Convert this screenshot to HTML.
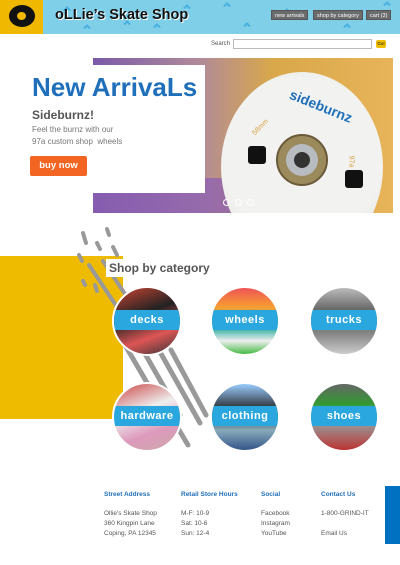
<!DOCTYPE html>
<html><head><meta charset="utf-8"><style>
*{margin:0;padding:0;box-sizing:border-box}
body{width:400px;height:565px;background:#fff;font-family:"Liberation Sans",sans-serif;position:relative;overflow:hidden}
.a{position:absolute}
.nav{background:#6b6b6b;color:#fff;font-size:5.5px;height:10px;line-height:10px;padding:0 3px;top:10px;border:1px solid #555}
.circ{width:70px;height:70px;border-radius:50%;overflow:hidden;border:2px solid #fff}
.band{position:absolute;left:0;right:0;top:22px;height:20px;background:#2ba7df;color:#fff;font-weight:bold;font-size:11px;text-align:center;line-height:20px;letter-spacing:.5px}
.fh{color:#1f6fba;font-weight:bold;font-size:6.5px;top:491px}
.fl{color:#555;font-size:6.5px;line-height:10px;top:509px}
</style></head><body>
<div class="a" style="left:0;top:0;width:400px;height:34px;background:#7fcfe8"></div>
<svg class="a" style="left:43px;top:0" width="357" height="34">
<g fill="#4bb1e0">
<path d="M20 10l4-4 4 4-2 1-2-2-2 2z"/><path d="M80 24l4-4 4 4-2 1-2-2-2 2z"/><path d="M140 8l4-4 4 4-2 1-2-2-2 2z"/><path d="M200 26l4-4 4 4-2 1-2-2-2 2z"/><path d="M240 12l4-4 4 4-2 1-2-2-2 2z"/><path d="M300 27l4-4 4 4-2 1-2-2-2 2z"/><path d="M340 5l4-4 4 4-2 1-2-2-2 2z"/><path d="M40 28l4-4 4 4-2 1-2-2-2 2z"/><path d="M110 27l4-4 4 4-2 1-2-2-2 2z"/><path d="M180 6l4-4 4 4-2 1-2-2-2 2z"/>
</g></svg>
<div class="a" style="left:0;top:0;width:43px;height:34px;background:#f0b800"></div>
<div class="a" style="left:9px;top:5px;width:26px;height:22px;border-radius:50%;background:#111"></div>
<div class="a" style="left:17px;top:12px;width:9px;height:8px;border-radius:50%;background:#f0b800"></div>
<div class="a" style="left:55px;top:7px;font-size:14.5px;font-weight:bold;color:#111;text-shadow:1px 1px 0 #fff">oLLie’s Skate Shop</div>
<div class="a nav" style="left:271px">new arrivals</div>
<div class="a nav" style="left:313px">shop by category</div>
<div class="a nav" style="left:366px">cart (3)</div>
<div class="a" style="left:211px;top:41px;font-size:6px;color:#555">Search</div>
<div class="a" style="left:233px;top:39px;width:139px;height:10px;border:1px solid #bbb"></div>
<div class="a" style="left:376px;top:40px;width:10px;height:8px;background:#f0c000;border-radius:2px;font-size:4.5px;text-align:center;line-height:8px">Go!</div>
<div class="a" style="left:93px;top:58px;width:300px;height:155px;background:linear-gradient(90deg,#7a5aa8 0%,#b08a9a 35%,#d9a84a 60%,#e8b45a 100%);overflow:hidden">
 <div class="a" style="left:0;top:120px;width:160px;height:40px;background:#8a5cb4;opacity:.7"></div>
 <div class="a" style="left:128px;top:14px;width:162px;height:190px;border-radius:50%;background:radial-gradient(circle at 50% 45%,#f2f2f0 60%,#d8d8d4 100%)"></div>
 <div class="a" style="left:183px;top:76px;width:52px;height:52px;border-radius:50%;background:#9a8a5c;border:2px solid #6a5a3a"></div>
 <div class="a" style="left:193px;top:86px;width:32px;height:32px;border-radius:50%;background:#b8bcc0"></div>
 <div class="a" style="left:201px;top:94px;width:16px;height:16px;border-radius:50%;background:#333"></div>
 <div class="a" style="left:195px;top:40px;color:#1f6fba;font-weight:bold;font-size:14px;transform:rotate(22deg)">sideburnz</div>
 <div class="a" style="left:158px;top:66px;color:#d9a040;font-size:7px;transform:rotate(-45deg)">58mm</div>
 <div class="a" style="left:252px;top:100px;color:#d9a040;font-size:7px;transform:rotate(90deg)">97a</div>
 <div class="a" style="left:155px;top:88px;width:18px;height:18px;background:#111;border-radius:3px"></div>
 <div class="a" style="left:252px;top:112px;width:18px;height:18px;background:#111;border-radius:3px"></div>
</div>
<div class="a" style="left:0;top:65px;width:205px;height:128px;background:#fff"></div>
<div class="a" style="left:32px;top:72px;font-size:26px;font-weight:bold;color:#1f6fba">New ArrivaLs</div>
<div class="a" style="left:32px;top:108px;font-size:12px;font-weight:bold;color:#555">Sideburnz!</div>
<div class="a" style="left:32px;top:124px;font-size:8px;color:#777;line-height:11.5px">Feel the burnz with our<br>97a custom shop &nbsp;wheels</div>
<div class="a" style="left:30px;top:156px;width:57px;height:20px;background:#f26522;border-radius:2px;color:#fff;font-weight:bold;font-size:9.5px;text-align:center;line-height:20px">buy now</div>
<div class="a" style="left:223px;top:199px;width:7px;height:7px;border:1px solid #fff;border-radius:50%"></div>
<div class="a" style="left:235px;top:199px;width:7px;height:7px;border:1px solid #fff;border-radius:50%"></div>
<div class="a" style="left:247px;top:199px;width:7px;height:7px;border:1px solid #fff;border-radius:50%"></div>
<div class="a" style="left:0;top:256px;width:123px;height:163px;background:#eebb00"></div>
<svg class="a" style="left:75px;top:225px" width="140" height="225">
<g stroke="#999" stroke-linecap="round" fill="none">
<path d="M8 8l3 10" stroke-width="4"/><path d="M32 4l2 6" stroke-width="4"/><path d="M22 18l3 6" stroke-width="4"/><path d="M38 22l4 8" stroke-width="4"/>
<path d="M4 30l3 6" stroke-width="4"/><path d="M14 40l30 45" stroke-width="4"/><path d="M28 36l40 60" stroke-width="4"/><path d="M8 56l2 4" stroke-width="4"/><path d="M20 60l2 6" stroke-width="4"/>
<path d="M50 120l35 60" stroke-width="5"/><path d="M65 120l40 70" stroke-width="5"/><path d="M80 118l45 80" stroke-width="5"/><path d="M96 125l35 65" stroke-width="5"/><path d="M70 180l15 25" stroke-width="5"/><path d="M95 190l18 30" stroke-width="5"/>
</g></svg>
<div class="a" style="left:106px;top:259px;background:#fff;padding:2px 3px;font-size:12px;font-weight:bold;color:#555">Shop by category</div>
<div class="a circ" style="left:112px;top:286px;background:linear-gradient(160deg,#c43 0%,#222 40%,#d55 70%,#333 100%)"><div class="band">decks</div></div>
<div class="a circ" style="left:210px;top:286px;background:linear-gradient(180deg,#e55 0%,#f7a030 30%,#2a9 60%,#eee 80%,#4b4 100%)"><div class="band">wheels</div></div>
<div class="a circ" style="left:309px;top:286px;background:linear-gradient(180deg,#bbb 0%,#555 40%,#888 70%,#ccc 100%)"><div class="band">trucks</div></div>
<div class="a circ" style="left:112px;top:382px;background:linear-gradient(160deg,#c44 0%,#eee 40%,#d9b 70%,#caa 100%)"><div class="band">hardware</div></div>
<div class="a circ" style="left:210px;top:382px;background:linear-gradient(180deg,#9cf 0%,#222 40%,#8ab 70%,#358 100%)"><div class="band">clothing</div></div>
<div class="a circ" style="left:309px;top:382px;background:linear-gradient(180deg,#666 0%,#393 30%,#999 60%,#b33 100%)"><div class="band">shoes</div></div>
<div class="a fh" style="left:104px">Street Address</div>
<div class="a fh" style="left:181px">Retail Store Hours</div>
<div class="a fh" style="left:261px">Social</div>
<div class="a fh" style="left:321px">Contact Us</div>
<div class="a fl" style="left:104px">Ollie's Skate Shop<br>360 Kingpin Lane<br>Coping, PA 12345</div>
<div class="a fl" style="left:181px">M-F: 10-9<br>Sat: 10-6<br>Sun: 12-4</div>
<div class="a fl" style="left:261px">Facebook<br>Instagram<br>YouTube</div>
<div class="a fl" style="left:321px">1-800-GRIND-IT<br><br>Email Us</div>
<div class="a" style="left:385px;top:486px;width:15px;height:58px;background:#0070c0"></div>
</body></html>
